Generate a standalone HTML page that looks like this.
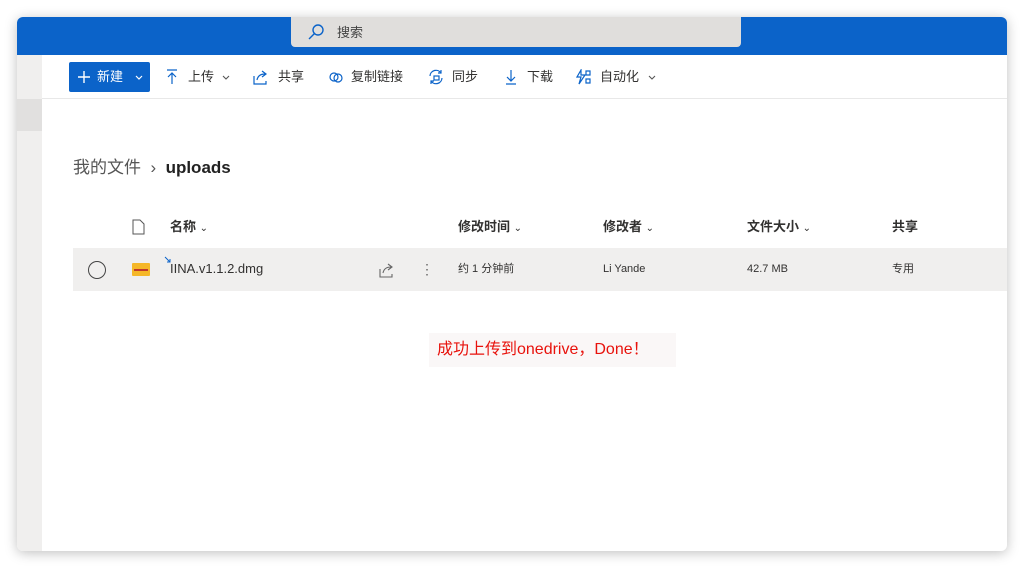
<!DOCTYPE html>
<html><head><meta charset="utf-8"><style>
*{margin:0;padding:0;box-sizing:border-box}
body{width:1024px;height:569px;background:#fff;font-family:"Liberation Sans","Noto Sans CJK SC",sans-serif;position:relative;overflow:hidden;color:#323130}
.win{position:absolute;left:17px;top:17px;width:990px;height:534px;background:#fff;border-radius:6px;overflow:hidden;box-shadow:0 2px 12px rgba(0,0,0,.25)}
.hdr{position:absolute;left:0;top:0;width:990px;height:38px;background:#0b63c9}
.search{position:absolute;left:274px;top:0;width:450px;height:30px;background:#e0dedc;border-radius:0 0 4px 4px;font-size:13px;color:#444}
.side{position:absolute;left:0;top:38px;width:25px;height:496px;background:#f0efee}
.side .b{position:absolute;top:44px;left:0;width:25px;height:32px;background:#e1e0df}
.tb{position:absolute;left:25px;top:38px;right:0;height:44px;border-bottom:1px solid #e8e8e8;font-size:13px}
.tb span{position:absolute;top:0;line-height:44px;height:44px;white-space:nowrap}
.tb svg{position:absolute;top:14px}
.new{position:absolute;left:27px;top:7px;width:81px;height:30px;background:#0b63c9;color:#fff;border-radius:2px}
.new span{line-height:30px!important;height:30px!important}
.t{position:absolute;white-space:nowrap;line-height:16px}
.row{position:absolute;left:56px;top:231px;width:934px;height:43px;background:#f0efee}
svg .s{fill:none;stroke:#0b63c9;stroke-width:1.2}
</style></head><body>
<div class="win">
<div class="hdr"></div>
<div class="search">
<svg style="position:absolute;left:16px;top:6px" width="18" height="18" viewBox="0 0 18 18"><circle cx="11" cy="7" r="5" fill="none" stroke="#0b63c9" stroke-width="1.4"/><path d="M7.5 10.5L2 16" stroke="#0b63c9" stroke-width="1.4"/></svg>
<span class="t" style="left:46px;top:8px">搜索</span></div>
<div class="side"><div class="b"></div></div>
<div class="tb">
<div class="new"><svg style="left:8px;top:8px" width="14" height="14" viewBox="0 0 14 14"><path d="M7 1v12M1 7h12" stroke="#fff" stroke-width="1.4"/></svg><span style="left:28px">新建</span><svg style="left:66px;top:13px" width="8" height="5" viewBox="0 0 8 5"><path d="M1 1l3 3 3-3" fill="none" stroke="#fff" stroke-width="1.2"/></svg></div>
<svg style="left:123px" width="14" height="16" viewBox="0 0 14 16"><path class="s" d="M2 1h10M7 4v11M3 8l4-4 4 4"/></svg><span style="left:146px">上传</span><svg style="left:180px;top:20px" width="8" height="5" viewBox="0 0 8 5"><path d="M1 1l3 3 3-3" fill="none" stroke="#555" stroke-width="1.1"/></svg>
<svg style="left:211px" width="16" height="16" viewBox="0 0 16 16"><path class="s" d="M1 7v8h12v-3M4 11c1-5 5-6 8-6M9 2l4 3-4 3"/></svg><span style="left:236px">共享</span>
<svg style="left:286px" width="16" height="16" viewBox="0 0 16 16"><circle class="s" cx="6" cy="8" r="4"/><circle class="s" cx="10" cy="9" r="4"/></svg><span style="left:309px">复制链接</span>
<svg style="left:386px" width="16" height="16" viewBox="0 0 16 16"><path class="s" d="M2 7a6 6 0 0 1 11-3M14 9a6 6 0 0 1-11 3M13 1v3h-3M3 15v-3h3"/><rect class="s" x="6" y="7" width="5" height="4"/></svg><span style="left:410px">同步</span>
<svg style="left:462px" width="14" height="16" viewBox="0 0 14 16"><path class="s" d="M7 1v11M3 8l4 4 4-4M2 15h10"/></svg><span style="left:485px">下载</span>
<svg style="left:534px" width="16" height="16" viewBox="0 0 16 16"><path class="s" d="M5 1L1 8h4l-2 7 6-9H5zM10 2h4v4h-4zM10 10h4v4h-4z"/></svg><span style="left:558px">自动化</span><svg style="left:606px;top:20px" width="8" height="5" viewBox="0 0 8 5"><path d="M1 1l3 3 3-3" fill="none" stroke="#555" stroke-width="1.1"/></svg>
</div>
<div class="t" style="left:56px;top:140px;font-size:17px;line-height:22px;color:#555">我的文件 &nbsp;›&nbsp; <b style="color:#222">uploads</b></div>
<svg style="position:absolute;left:115px;top:202px" width="13" height="16" viewBox="0 0 13 16"><path d="M1 1h7l4 4v10H1z" fill="none" stroke="#555"/></svg>
<div class="t" style="left:153px;top:202px;font-size:13px;font-weight:bold">名称 <small style="font-weight:normal;font-size:10px">⌄</small></div>
<div class="t" style="left:441px;top:202px;font-size:13px;font-weight:bold">修改时间 <small style="font-weight:normal;font-size:10px">⌄</small></div>
<div class="t" style="left:586px;top:202px;font-size:13px;font-weight:bold">修改者 <small style="font-weight:normal;font-size:10px">⌄</small></div>
<div class="t" style="left:730px;top:202px;font-size:13px;font-weight:bold">文件大小 <small style="font-weight:normal;font-size:10px">⌄</small></div>
<div class="t" style="left:875px;top:202px;font-size:13px;font-weight:bold">共享</div>
<div class="row">
<div style="position:absolute;left:15px;top:13px;width:18px;height:18px;border:1.5px solid #444;border-radius:50%"></div>
<div style="position:absolute;left:59px;top:15px;width:18px;height:13px;background:#f5b728;border-radius:1px"><div style="position:absolute;left:2px;top:6px;width:14px;height:2px;background:#c0392b"></div></div>
<svg style="position:absolute;left:91px;top:8px" width="8" height="8" viewBox="0 0 8 8"><path d="M1 1l5 5M3 6h3V3" fill="none" stroke="#0b63c9"/></svg>
<span class="t" style="left:97px;top:13px;font-size:13px">IINA.v1.1.2.dmg</span>
<svg style="position:absolute;left:306px;top:14px" width="16" height="16" viewBox="0 0 16 16"><path d="M1 7v8h12v-3M4 11c1-5 5-6 8-6M9 2l4 3-4 3" fill="none" stroke="#666" stroke-width="1.1"/></svg>
<span class="t" style="left:347px;top:13px;font-size:14px;color:#666">⋮</span>
<span class="t" style="left:385px;top:13px;font-size:11px">约 1 分钟前</span>
<span class="t" style="left:530px;top:13px;font-size:11px">Li Yande</span>
<span class="t" style="left:674px;top:13px;font-size:11px">42.7 MB</span>
<span class="t" style="left:819px;top:13px;font-size:11px">专用</span>
</div>
<div class="t" style="left:412px;top:316px;padding:7px 8px;background:#faf7f7;color:#e8120c;font-size:16px;line-height:20px;width:247px">成功上传到onedrive，Done！</div>
</div>
</body></html>
